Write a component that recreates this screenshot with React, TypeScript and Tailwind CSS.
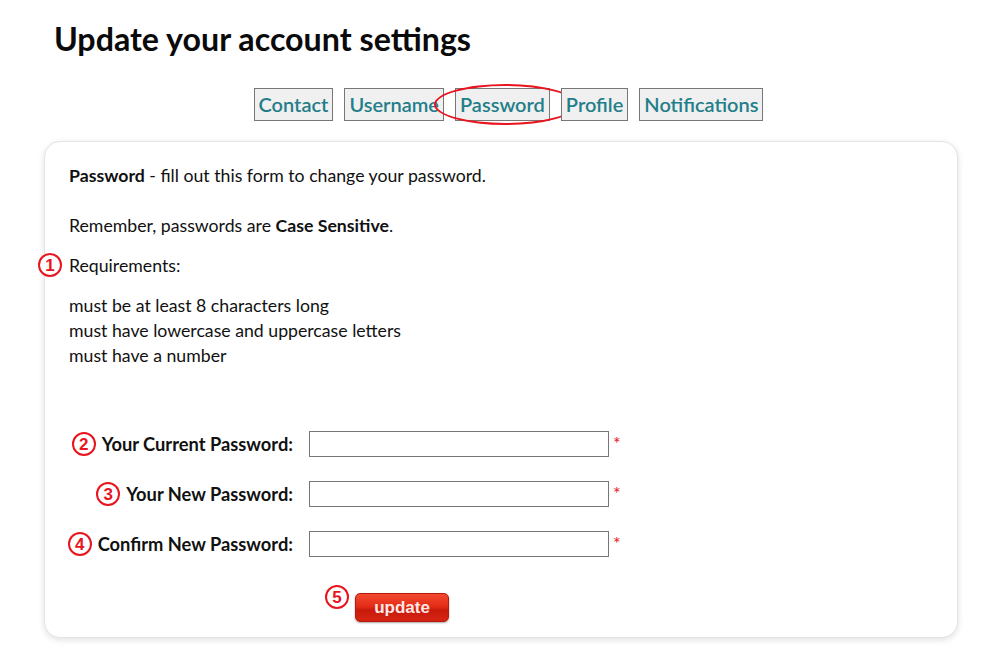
const TABS = ["Contact", "Username", "Password", "Profile", "Notifications"];

const FIELDS = [
  { n: 2, label: "Your Current Password:" },
  { n: 3, label: "Your New Password:" },
  { n: 4, label: "Confirm New Password:" },
];

function Marker({ n, className = "" }: { n: number; className?: string }) {
  return (
    <span
      className={`inline-flex h-[24px] w-[24px] shrink-0 items-center justify-center rounded-full border-2 border-[#e8141e] bg-white text-[17px] leading-none font-bold text-[#e8141e] font-['Liberation_Sans',Arial,sans-serif] ${className}`}
    >
      {n}
    </span>
  );
}

export default function App() {
  return (
    <div className="min-h-[664px] bg-white font-['Lato','Noto_Sans',sans-serif] text-[#111]">
      {/* Title */}
      <h1 className="pl-[54px] pt-[19px] text-[32.2px] leading-[40px] font-bold text-[#0a0a0a]">
        Update your account settings
      </h1>

      {/* Tabs */}
      <div className="mt-[29px] flex justify-center gap-[11px] pl-[18px]">
        {TABS.map((t) => (
          <div key={t} className="relative">
            <button className="h-[33px] border border-[#777] bg-[#f0f0f0] px-[4px] text-[20px] leading-[31px] font-semibold text-[#237e8a]">
              {t}
            </button>
            {t === "Password" && (
              <span className="pointer-events-none absolute left-[-21px] top-[-4px] h-[41px] w-[143px] rounded-[50%] border-2 border-[#e8141e]" />
            )}
          </div>
        ))}
      </div>

      {/* Card */}
      <div className="ml-[44px] mt-[20px] w-[914px] rounded-[16px] border border-[#e4e4e4] bg-white px-[24px] pt-[21px] pb-[15px] text-[17.7px] leading-[25px] shadow-[0_2px_6px_rgba(0,0,0,0.12)]">
        <p>
          <b>Password</b> - fill out this form to change your password.
        </p>
        <p className="mt-[25px]">
          Remember, passwords are <b>Case Sensitive</b>.
        </p>
        <p className="relative mt-[15px]">
          <Marker n={1} className="absolute left-[-31px] top-[0px]" />
          Requirements:
        </p>
        <ul className="mt-[15px]">
          <li>must be at least 8 characters long</li>
          <li>must have lowercase and uppercase letters</li>
          <li>must have a number</li>
        </ul>

        {/* Form */}
        <div className="mt-[63px] flex flex-col gap-[24px]">
          {FIELDS.map((f) => (
            <div key={f.n} className="flex items-center">
              <label className="flex w-[224px] shrink-0 items-center justify-end gap-[6px] whitespace-nowrap text-[18.3px] font-bold">
                <Marker n={f.n} />
                <span>{f.label}</span>
              </label>
              <input
                type="password"
                className="ml-[16px] h-[26px] w-[300px] border border-[#767676] bg-white px-1 outline-none"
              />
              <span className="ml-[4px] self-start pt-[5px] text-[18px] leading-[15px] text-[#e8141e]">*</span>
            </div>
          ))}
        </div>

        <div className="mt-[36px] pl-[286px]">
          <div className="relative inline-block">
            <Marker n={5} className="absolute left-[-30px] top-[-8px]" />
            <button className="h-[29px] w-[94px] rounded-[5px] border border-[#b8180c] bg-[linear-gradient(#f04a30_0%,#e52d17_45%,#c81a0b_60%,#d62512_100%)] text-[17px] leading-[27px] font-bold text-[#fde8e4] font-['Liberation_Sans',Arial,sans-serif] shadow-[0_1px_2px_rgba(0,0,0,0.35)]">
              update
            </button>
          </div>
        </div>
      </div>
    </div>
  );
}
